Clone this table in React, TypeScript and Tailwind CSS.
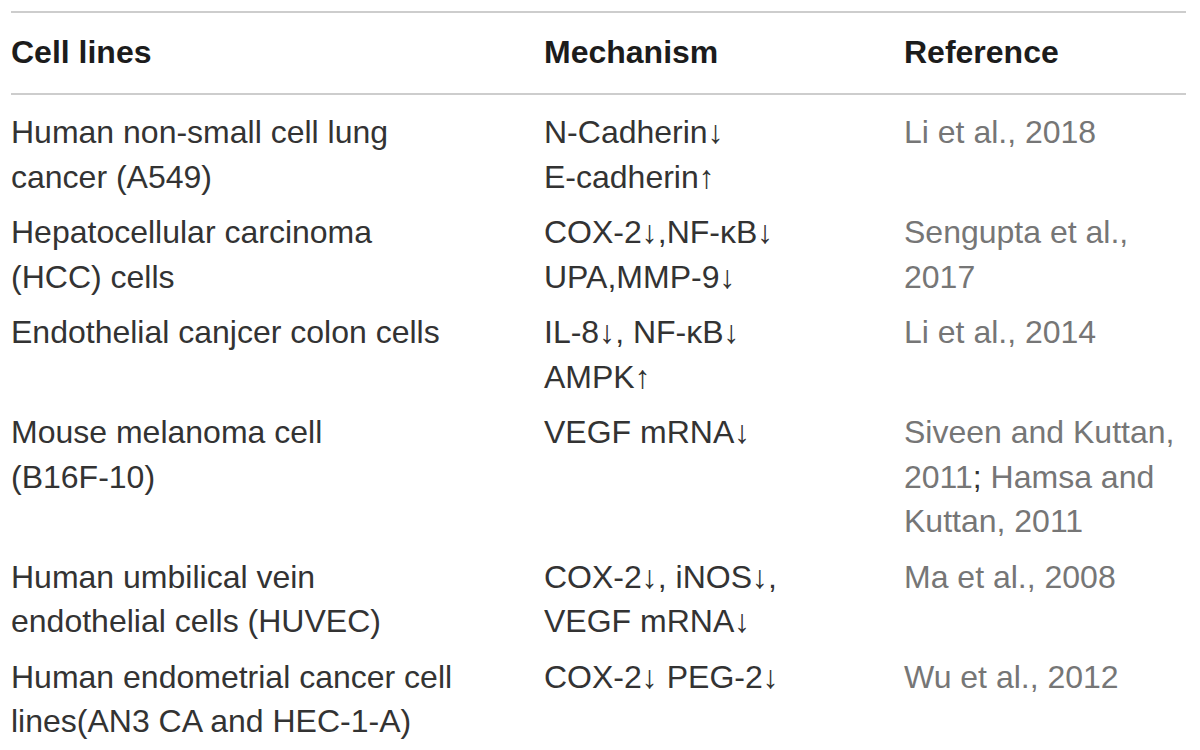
import React from "react";

type Row = {
  cell: string[];
  mechanism: string[];
  reference: React.ReactNode[];
};

const rows: Row[] = [
  {
    cell: ["Human non-small cell lung", "cancer (A549)"],
    mechanism: ["N-Cadherin↓", "E-cadherin↑"],
    reference: ["Li et al., 2018"],
  },
  {
    cell: ["Hepatocellular carcinoma", "(HCC) cells"],
    mechanism: ["COX-2↓,NF-κB↓", "UPA,MMP-9↓"],
    reference: ["Sengupta et al.,", "2017"],
  },
  {
    cell: ["Endothelial canjcer colon cells"],
    mechanism: ["IL-8↓, NF-κB↓", "AMPK↑"],
    reference: ["Li et al., 2014"],
  },
  {
    cell: ["Mouse melanoma cell", "(B16F-10)"],
    mechanism: ["VEGF mRNA↓"],
    reference: [
      "Siveen and Kuttan,",
      <>
        2011<span className="text-[#333333]">;</span> Hamsa and
      </>,
      "Kuttan, 2011",
    ],
  },
  {
    cell: ["Human umbilical vein", "endothelial cells (HUVEC)"],
    mechanism: ["COX-2↓, iNOS↓,", "VEGF mRNA↓"],
    reference: ["Ma et al., 2008"],
  },
  {
    cell: ["Human endometrial cancer cell", "lines(AN3 CA and HEC-1-A)"],
    mechanism: ["COX-2↓ PEG-2↓"],
    reference: ["Wu et al., 2012"],
  },
];

function Lines({ items }: { items: React.ReactNode[] }) {
  return (
    <div className="flex flex-col">
      {items.map((line, i) => (
        <div key={i} className="whitespace-nowrap">
          {line}
        </div>
      ))}
    </div>
  );
}

export default function App() {
  return (
    <main
      className="min-h-screen w-[1200px] bg-white pl-[11px] pr-[14px] pt-[11px] text-[32px] leading-[44.5px]"
      style={{ fontFamily: '"Liberation Sans", Arial, sans-serif' }}
    >
      <div className="border-t-2 border-[#cdcdcd]" />
      <div className="grid grid-cols-[533px_360px_1fr] pb-[18.5px] pt-[17px] font-bold text-[#1c1c1c]">
        <div>Cell lines</div>
        <div>Mechanism</div>
        <div>Reference</div>
      </div>
      <div className="border-t-2 border-[#cdcdcd]" />
      <div className="flex flex-col pt-[10px]">
        {rows.map((row, i) => (
          <div
            key={i}
            className="grid grid-cols-[533px_360px_1fr] pb-[6px] pt-[5px]"
          >
            <div className="text-[#333333]">
              <Lines items={row.cell} />
            </div>
            <div className="text-[#333333]">
              <Lines items={row.mechanism} />
            </div>
            <div className="text-[#767676]">
              <Lines items={row.reference} />
            </div>
          </div>
        ))}
      </div>
    </main>
  );
}
